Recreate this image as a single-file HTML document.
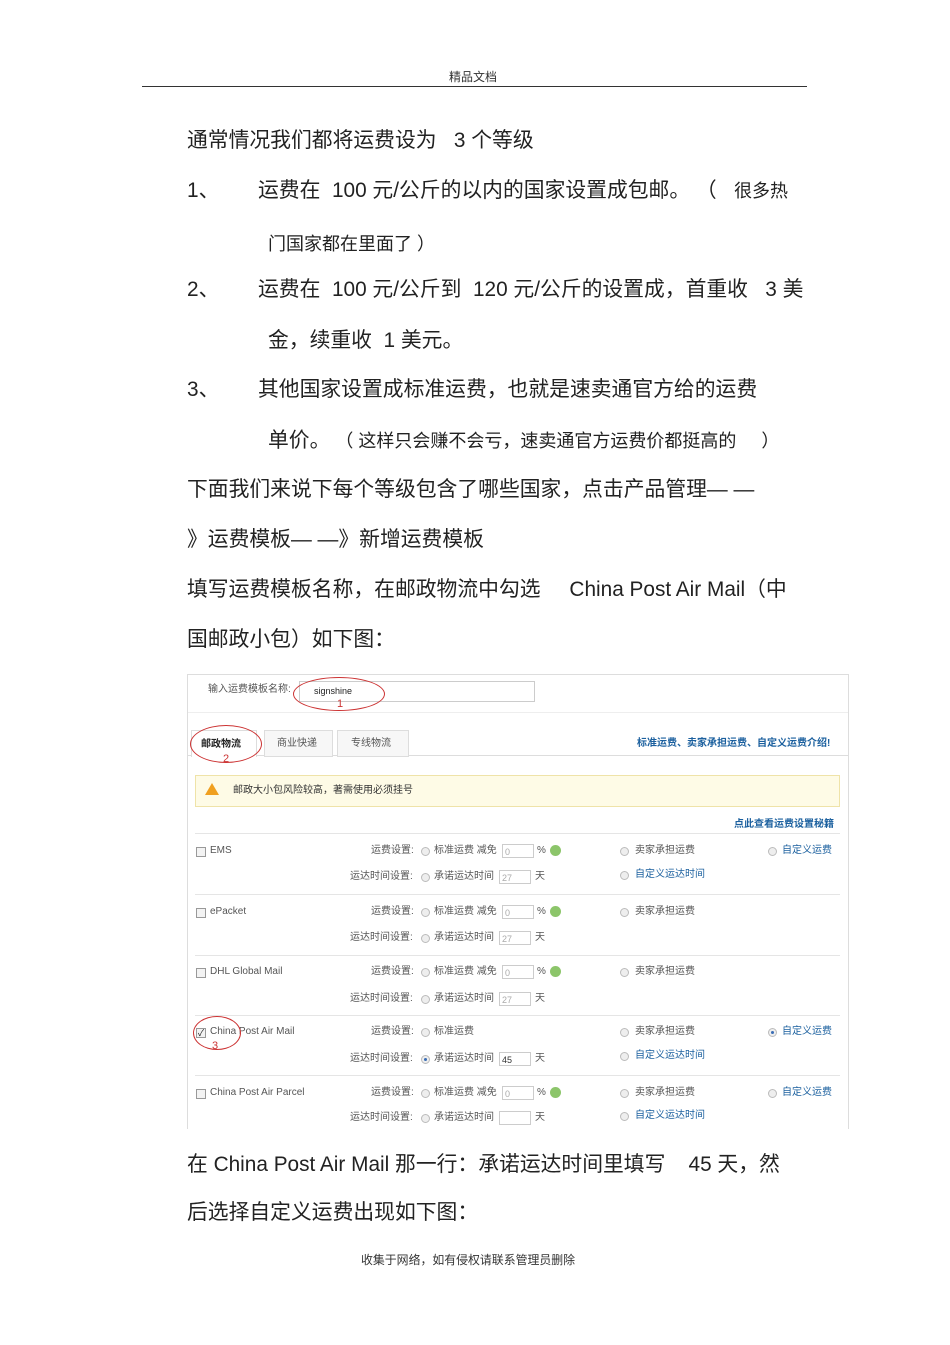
<!DOCTYPE html>
<html><head><meta charset="utf-8"><style>
body{margin:0;width:950px;height:1345px;background:#fff;position:relative;font-family:"Liberation Sans","Noto Sans CJK SC",sans-serif;color:#222;overflow:hidden}
.a{position:absolute;white-space:nowrap}
.t{font-size:20.8px;line-height:24px}
.m{font-size:18px}
.s{font-size:10px;color:#555;line-height:12px}
.b{color:#1a5f9e}
.inp{position:absolute;border:1px solid #ccc;background:#fff;height:14px;font-size:9px;color:#aaa;line-height:14px;padding-left:2px;box-sizing:border-box}
.r{position:absolute;width:7px;height:7px;border:1px solid #bbb;border-radius:50%;background:#eee}
.r.on::after{content:"";position:absolute;left:2px;top:2px;width:3px;height:3px;border-radius:50%;background:#3a6db5}
.cb{position:absolute;width:8px;height:8px;border:1px solid #999;background:#f3f3f3}
.g{position:absolute;width:11px;height:11px;border-radius:50%;background:#8cc56a}
.sep{position:absolute;left:195px;width:645px;height:1px;background:#e5e5e5}
</style></head><body>
<div class="a" style="left:449px;top:68px;font-size:12px;color:#333">精品文档</div>
<div class="a" style="left:142px;top:86px;width:665px;height:1px;background:#333"></div>

<div class="a t" style="left:187px;top:129px">通常情况我们都将运费设为 &nbsp;&nbsp;3 个等级</div>
<div class="a t" style="left:187px;top:179px">1、</div>
<div class="a t" style="left:258px;top:179px">运费在 &nbsp;100 元/公斤的以内的国家设置成包邮。 （ &nbsp;&nbsp;<span class="m">很多热</span></div>
<div class="a m" style="left:268px;top:230px">门国家都在里面了 ）</div>
<div class="a t" style="left:187px;top:278px">2、</div>
<div class="a t" style="left:258px;top:278px">运费在 &nbsp;100 元/公斤到 &nbsp;120 元/公斤的设置成，首重收 &nbsp;&nbsp;3 美</div>
<div class="a t" style="left:268px;top:329px">金，续重收 &nbsp;1 美元。</div>
<div class="a t" style="left:187px;top:378px">3、</div>
<div class="a t" style="left:258px;top:378px">其他国家设置成标准运费，也就是速卖通官方给的运费</div>
<div class="a t" style="left:268px;top:429px">单价。<span class="m"> （ 这样只会赚不会亏，速卖通官方运费价都挺高的 &nbsp;&nbsp;&nbsp;&nbsp;）</span></div>
<div class="a t" style="left:187px;top:478px">下面我们来说下每个等级包含了哪些国家，点击产品管理— —</div>
<div class="a t" style="left:187px;top:528px">》运费模板— —》新增运费模板</div>
<div class="a t" style="left:187px;top:578px">填写运费模板名称，在邮政物流中勾选 &nbsp;&nbsp;&nbsp;&nbsp;China Post Air Mail（中</div>
<div class="a t" style="left:187px;top:628px">国邮政小包）如下图：</div>

<!-- screenshot -->
<div class="a" style="left:187px;top:674px;width:662px;height:455px;border:1px solid #ddd;border-bottom:none;box-sizing:border-box"></div>
<div class="a s" style="left:208px;top:684px">输入运费模板名称:</div>
<div class="inp" style="left:299px;top:681px;width:236px;height:21px;color:#222;font-size:9px;line-height:19px;padding-left:14px">signshine</div>
<div class="a" style="left:293px;top:677px;width:90px;height:32px;border:1px solid #c33;border-radius:50%"></div>
<div class="a" style="left:337px;top:698px;font-size:11px;color:#c33">1</div>
<div class="a" style="left:188px;top:712px;width:660px;height:1px;background:#eee"></div>
<div class="a" style="left:188px;top:755px;width:660px;height:1px;background:#ddd"></div>
<div class="a" style="left:191px;top:730px;width:64px;height:26px;border:1px solid #ddd;border-bottom:none;background:#fff"></div>
<div class="a" style="left:264px;top:730px;width:67px;height:25px;border:1px solid #ddd;background:#f7f7f7"></div>
<div class="a" style="left:337px;top:730px;width:70px;height:25px;border:1px solid #ddd;background:#f7f7f7"></div>
<div class="a s" style="left:201px;top:739px;color:#222;font-weight:bold">邮政物流</div>
<div class="a s" style="left:277px;top:738px">商业快递</div>
<div class="a s" style="left:351px;top:738px">专线物流</div>
<div class="a" style="left:190px;top:725px;width:70px;height:36px;border:1px solid #c33;border-radius:50%"></div>
<div class="a" style="left:223px;top:753px;font-size:11px;color:#c33">2</div>
<div class="a s b" style="left:637px;top:738px;font-weight:bold">标准运费、卖家承担运费、自定义运费介绍!</div>
<div class="a" style="left:195px;top:775px;width:645px;height:32px;background:#fefbe6;border:1px solid #efe3a8;box-sizing:border-box"></div>
<div class="a" style="left:205px;top:783px;width:0;height:0;border-left:7px solid transparent;border-right:7px solid transparent;border-bottom:12px solid #f0a020"></div>
<div class="a s" style="left:233px;top:785px;color:#333">邮政大小包风险较高，著需使用必须挂号</div>
<div class="a s b" style="left:734px;top:819px;font-weight:bold">点此查看运费设置秘籍</div>
<div class="sep" style="top:833px"></div>

<!-- rows -->
<div class="cb" style="left:196px;top:847px"></div><div class="a s" style="left:210px;top:845px">EMS</div>
<div class="a s" style="left:371px;top:845px">运费设置:</div><div class="r" style="left:421px;top:847px"></div><div class="a s" style="left:434px;top:845px">标准运费 减免</div><div class="inp" style="left:502px;top:844px;width:32px">0</div><div class="a s" style="left:537px;top:845px">%</div><div class="g" style="left:550px;top:845px"></div>
<div class="r" style="left:620px;top:847px"></div><div class="a s" style="left:635px;top:845px">卖家承担运费</div>
<div class="r" style="left:768px;top:847px"></div><div class="a s b" style="left:782px;top:845px">自定义运费</div>
<div class="a s" style="left:350px;top:871px">运达时间设置:</div><div class="r" style="left:421px;top:873px"></div><div class="a s" style="left:434px;top:871px">承诺运达时间</div><div class="inp" style="left:499px;top:870px;width:32px">27</div><div class="a s" style="left:535px;top:871px">天</div>
<div class="r" style="left:620px;top:871px"></div><div class="a s b" style="left:635px;top:869px">自定义运达时间</div>
<div class="sep" style="top:894px"></div>

<div class="cb" style="left:196px;top:908px"></div><div class="a s" style="left:210px;top:906px">ePacket</div>
<div class="a s" style="left:371px;top:906px">运费设置:</div><div class="r" style="left:421px;top:908px"></div><div class="a s" style="left:434px;top:906px">标准运费 减免</div><div class="inp" style="left:502px;top:905px;width:32px">0</div><div class="a s" style="left:537px;top:906px">%</div><div class="g" style="left:550px;top:906px"></div>
<div class="r" style="left:620px;top:908px"></div><div class="a s" style="left:635px;top:906px">卖家承担运费</div>
<div class="a s" style="left:350px;top:932px">运达时间设置:</div><div class="r" style="left:421px;top:934px"></div><div class="a s" style="left:434px;top:932px">承诺运达时间</div><div class="inp" style="left:499px;top:931px;width:32px">27</div><div class="a s" style="left:535px;top:932px">天</div>
<div class="sep" style="top:955px"></div>

<div class="cb" style="left:196px;top:968px"></div><div class="a s" style="left:210px;top:966px">DHL Global Mail</div>
<div class="a s" style="left:371px;top:966px">运费设置:</div><div class="r" style="left:421px;top:968px"></div><div class="a s" style="left:434px;top:966px">标准运费 减免</div><div class="inp" style="left:502px;top:965px;width:32px">0</div><div class="a s" style="left:537px;top:966px">%</div><div class="g" style="left:550px;top:966px"></div>
<div class="r" style="left:620px;top:968px"></div><div class="a s" style="left:635px;top:966px">卖家承担运费</div>
<div class="a s" style="left:350px;top:993px">运达时间设置:</div><div class="r" style="left:421px;top:995px"></div><div class="a s" style="left:434px;top:993px">承诺运达时间</div><div class="inp" style="left:499px;top:992px;width:32px">27</div><div class="a s" style="left:535px;top:993px">天</div>
<div class="sep" style="top:1015px"></div>

<div class="cb" style="left:196px;top:1028px;font-size:9px;line-height:8px;text-align:center">✓</div><div class="a s" style="left:210px;top:1026px">China Post Air Mail</div>
<div class="a" style="left:193px;top:1016px;width:46px;height:32px;border:1px solid #c33;border-radius:50%"></div>
<div class="a" style="left:212px;top:1040px;font-size:11px;color:#c33">3</div>
<div class="a s" style="left:371px;top:1026px">运费设置:</div><div class="r" style="left:421px;top:1028px"></div><div class="a s" style="left:434px;top:1026px">标准运费</div>
<div class="r" style="left:620px;top:1028px"></div><div class="a s" style="left:635px;top:1026px">卖家承担运费</div>
<div class="r on" style="left:768px;top:1028px"></div><div class="a s b" style="left:782px;top:1026px">自定义运费</div>
<div class="a s" style="left:350px;top:1053px">运达时间设置:</div><div class="r on" style="left:421px;top:1055px"></div><div class="a s" style="left:434px;top:1053px">承诺运达时间</div><div class="inp" style="left:499px;top:1052px;width:32px;color:#333">45</div><div class="a s" style="left:535px;top:1053px">天</div>
<div class="r" style="left:620px;top:1052px"></div><div class="a s b" style="left:635px;top:1050px">自定义运达时间</div>
<div class="sep" style="top:1075px"></div>

<div class="cb" style="left:196px;top:1089px"></div><div class="a s" style="left:210px;top:1087px">China Post Air Parcel</div>
<div class="a s" style="left:371px;top:1087px">运费设置:</div><div class="r" style="left:421px;top:1089px"></div><div class="a s" style="left:434px;top:1087px">标准运费 减免</div><div class="inp" style="left:502px;top:1086px;width:32px">0</div><div class="a s" style="left:537px;top:1087px">%</div><div class="g" style="left:550px;top:1087px"></div>
<div class="r" style="left:620px;top:1089px"></div><div class="a s" style="left:635px;top:1087px">卖家承担运费</div>
<div class="r" style="left:768px;top:1089px"></div><div class="a s b" style="left:782px;top:1087px">自定义运费</div>
<div class="a s" style="left:350px;top:1112px">运达时间设置:</div><div class="r" style="left:421px;top:1114px"></div><div class="a s" style="left:434px;top:1112px">承诺运达时间</div><div class="inp" style="left:499px;top:1111px;width:32px"></div><div class="a s" style="left:535px;top:1112px">天</div>
<div class="r" style="left:620px;top:1112px"></div><div class="a s b" style="left:635px;top:1110px">自定义运达时间</div>

<div class="a t" style="left:187px;top:1153px">在 China Post Air Mail 那一行：承诺运达时间里填写 &nbsp;&nbsp;&nbsp;45 天，然</div>
<div class="a t" style="left:187px;top:1201px">后选择自定义运费出现如下图：</div>
<div class="a" style="left:361px;top:1251px;font-size:11.9px;color:#333">收集于网络，如有侵权请联系管理员删除</div>
</body></html>
